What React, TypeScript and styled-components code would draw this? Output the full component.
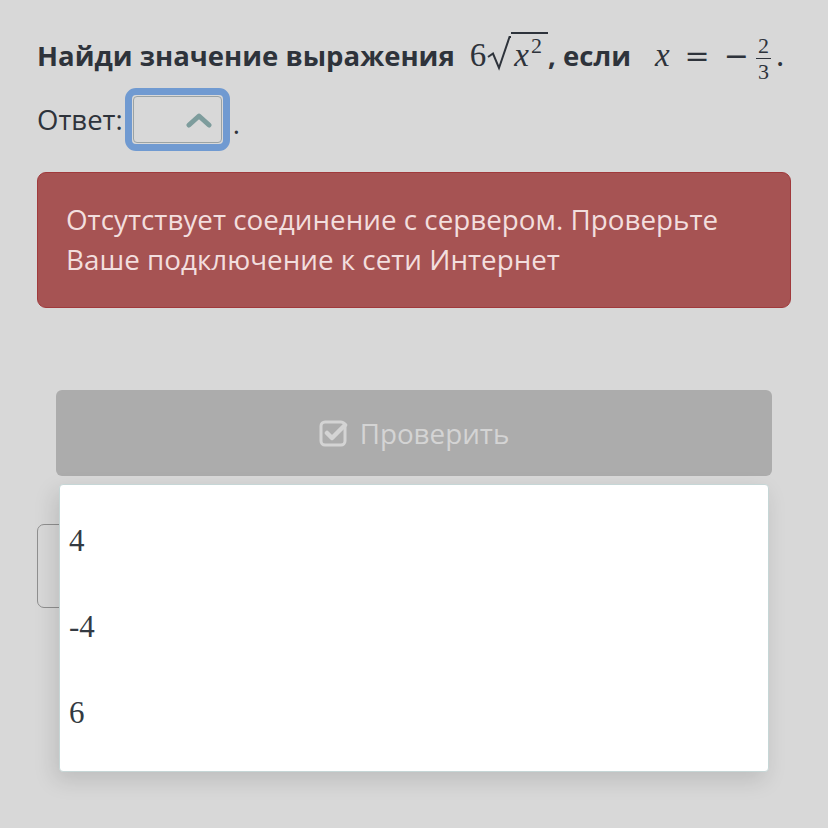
import React from "react";
import styled, { createGlobalStyle } from "styled-components";

const Global = createGlobalStyle`
  html, body { margin: 0; padding: 0; background: #d8d8d8; }
  body { font-family: "Open Sans", "Noto Sans", sans-serif; color: #2e333b; }
`;

const Page = styled.div`
  position: relative;
  width: 828px;
  height: 828px;
  box-sizing: border-box;
  padding: 32px 37px 0 37px;
  background: #d8d8d8;
  overflow: hidden;
`;

const Heading = styled.div`
  height: 44px;
  font-size: 27.5px;
  font-weight: 700;
  line-height: 44px;
  white-space: nowrap;
`;

const Math = styled.span<{ $ml?: number }>`
  font-family: "Liberation Serif", serif;
  font-weight: 400;
  font-size: 33px;
  color: #2e333b;
  margin-left: ${(p) => p.$ml ?? 0}px;
`;

const MathVar = styled.span`
  font-style: italic;
`;

const Radical = styled.svg`
  vertical-align: -5px;
  margin-left: 1px;
`;

const Radicand = styled.span`
  display: inline-block;
  border-top: 2px solid #2e333b;
  padding: 1px 6px 0 3px;
  line-height: 1;
`;

const Sup = styled.span`
  font-size: 22px;
  vertical-align: 13px;
  margin-left: 2px;
`;

const Op = styled.span<{ $l: number }>`
  font-family: "DejaVu Serif", serif;
  font-size: 30px;
  margin-left: ${(p) => p.$l}px;
`;

const Frac = styled.span`
  display: inline-flex;
  flex-direction: column;
  align-items: center;
  font-size: 22px;
  line-height: 20px;
  vertical-align: 13px;
  margin-left: 7px;
`;

const FracBar = styled.span`
  width: 15px;
  height: 1.5px;
  background: #2e333b;
  margin: 1.6px 0 2.9px;
`;

const Period = styled.span`
  margin-left: 5px;
`;

const Answer = styled.div`
  margin-top: 12px;
  display: flex;
  align-items: center;
  font-size: 27.5px;
  line-height: 36px;
`;

const SelectRing = styled.div`
  margin-left: 2px;
  width: 105px;
  height: 63px;
  box-sizing: border-box;
  border: 7px solid #709ad1;
  border-radius: 11px;
  padding: 1px;
  display: flex;
`;

const SelectInner = styled.div`
  flex: 1;
  border: 1.5px solid #9aa3a5;
  border-radius: 4px;
  display: flex;
  align-items: center;
  justify-content: flex-end;
  padding-right: 9px;
`;

const Dot = styled.span`
  margin-left: 3px;
  margin-top: 8px;
`;

const ErrorBox = styled.div`
  margin-top: 21px;
  width: 754px;
  height: 136px;
  box-sizing: border-box;
  background: #a65353;
  border: 1.5px solid #a03a3c;
  border-radius: 9px;
  padding: 26px 28px 0;
  color: #f2dede;
  font-size: 27.8px;
  line-height: 40px;
`;

const CheckButton = styled.div`
  margin: 82px 19px 0 19px;
  height: 86px;
  background: #acacac;
  border-radius: 6px;
  display: flex;
  align-items: center;
  justify-content: center;
  gap: 12px;
  color: #d4d4d4;
  font-size: 27.8px;
`;

const BehindBox = styled.div`
  margin-top: 48px;
  width: 260px;
  height: 84px;
  box-sizing: border-box;
  border: 1.5px solid #8f8f8f;
  border-radius: 7px;
`;

const Dropdown = styled.div`
  position: absolute;
  left: 59px;
  top: 484px;
  width: 710px;
  height: 288px;
  box-sizing: border-box;
  background: #fff;
  border: 1.5px solid #c6d6d6;
  border-radius: 4px;
  box-shadow: -4px 8px 22px rgba(0, 0, 0, 0.13);
  padding-top: 38px;
`;

const Option = styled.div`
  height: 86px;
  padding-left: 9px;
  font-family: "Liberation Serif", serif;
  font-size: 31px;
  line-height: 36px;
  color: #333a42;
`;

export default function App() {
  return (
    <>
      <Global />
      <Page>
        <Heading>
          Найди значение выражения{" "}
          <Math $ml={8}>
            6
            <Radical width="24" height="35" viewBox="0 0 24 35">
              <path d="M1 21 L6 17.5 L12 32 L22.5 1 L24 1" fill="none" stroke="#2e333b" strokeWidth="2" strokeLinejoin="miter" />
            </Radical>
            <Radicand>
              <MathVar>x</MathVar>
              <Sup>2</Sup>
            </Radicand>
          </Math>
          , если
          <Math $ml={24}>
            <MathVar>x</MathVar>
            <Op $l={15}>=</Op>
            <Op $l={14}>−</Op>
            <Frac>
              <span>2</span>
              <FracBar />
              <span>3</span>
            </Frac>
            <Period>.</Period>
          </Math>
        </Heading>
        <Answer>
          Ответ:
          <SelectRing>
            <SelectInner>
              <svg width="26" height="16" viewBox="0 0 26 16">
                <path d="M3 13 L13 4 L23 13" fill="none" stroke="#7d9c9c" strokeWidth="5" strokeLinecap="round" strokeLinejoin="round" />
              </svg>
            </SelectInner>
          </SelectRing>
          <Dot>.</Dot>
        </Answer>
        <ErrorBox>
          Отсутствует соединение с сервером. Проверьте
          <br />
          Ваше подключение к сети Интернет
        </ErrorBox>
        <CheckButton>
          <svg width="29" height="27" viewBox="0 0 29 27">
            <rect x="2" y="2" width="24" height="23" rx="4" fill="none" stroke="#d4d4d4" strokeWidth="3" />
            <path d="M8 13 L13 18 L26 5" fill="none" stroke="#d4d4d4" strokeWidth="4.5" strokeLinecap="round" strokeLinejoin="round" />
          </svg>
          Проверить
        </CheckButton>
        <BehindBox />
        <Dropdown>
          <Option>4</Option>
          <Option>-4</Option>
          <Option>6</Option>
        </Dropdown>
      </Page>
    </>
  );
}
